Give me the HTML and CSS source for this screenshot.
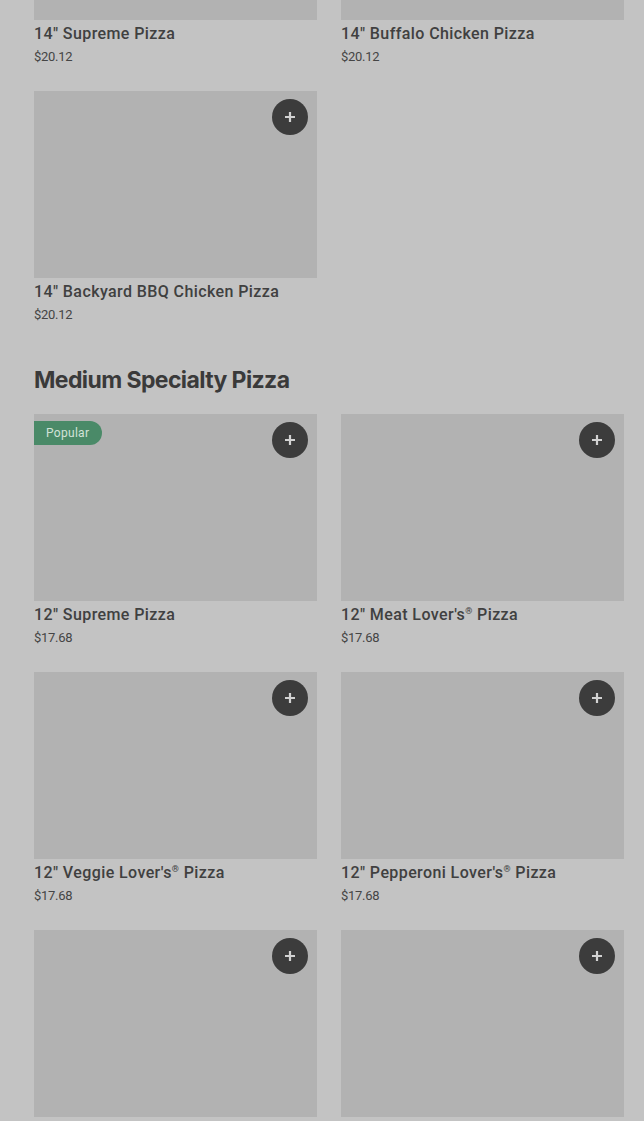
FILE: index.html
```html
<!DOCTYPE html>
<html lang="en">
<head>
  <meta charset="UTF-8">
  <meta name="viewport" content="width=device-width, initial-scale=1.0">
  <title>Menu</title>
  <link rel="stylesheet" href="styles.css">
</head>
<body>
  <div class="menu">
    <!-- Large specialty (scrolled) -->
    <section class="category first">
      <div class="grid">
        <div class="card">
          <div class="thumb"></div>
          <div class="name">14" Supreme Pizza</div>
          <div class="price">$20.12</div>
        </div>
        <div class="card">
          <div class="thumb"></div>
          <div class="name">14" Buffalo Chicken Pizza</div>
          <div class="price">$20.12</div>
        </div>
        <div class="card">
          <div class="thumb">
            <span class="add"><svg viewBox="0 0 12 12"><path d="M6 1v10M1 6h10"/></svg></span>
          </div>
          <div class="name">14" Backyard BBQ Chicken Pizza</div>
          <div class="price">$20.12</div>
        </div>
      </div>
    </section>

    <section class="category">
      <h2>Medium Specialty Pizza</h2>
      <div class="grid">
        <div class="card">
          <div class="thumb">
            <span class="badge">Popular</span>
            <span class="add"><svg viewBox="0 0 12 12"><path d="M6 1v10M1 6h10"/></svg></span>
          </div>
          <div class="name">12" Supreme Pizza</div>
          <div class="price">$17.68</div>
        </div>
        <div class="card">
          <div class="thumb">
            <span class="add"><svg viewBox="0 0 12 12"><path d="M6 1v10M1 6h10"/></svg></span>
          </div>
          <div class="name">12" Meat Lover's<sup>®</sup> Pizza</div>
          <div class="price">$17.68</div>
        </div>
        <div class="card">
          <div class="thumb">
            <span class="add"><svg viewBox="0 0 12 12"><path d="M6 1v10M1 6h10"/></svg></span>
          </div>
          <div class="name">12" Veggie Lover's<sup>®</sup> Pizza</div>
          <div class="price">$17.68</div>
        </div>
        <div class="card">
          <div class="thumb">
            <span class="add"><svg viewBox="0 0 12 12"><path d="M6 1v10M1 6h10"/></svg></span>
          </div>
          <div class="name">12" Pepperoni Lover's<sup>®</sup> Pizza</div>
          <div class="price">$17.68</div>
        </div>
        <div class="card">
          <div class="thumb">
            <span class="add"><svg viewBox="0 0 12 12"><path d="M6 1v10M1 6h10"/></svg></span>
          </div>
          <div class="name">12" Chicken Bacon Parmesan Pizza</div>
          <div class="price">$17.68</div>
        </div>
        <div class="card">
          <div class="thumb">
            <span class="add"><svg viewBox="0 0 12 12"><path d="M6 1v10M1 6h10"/></svg></span>
          </div>
          <div class="name">12" Pepperoni &amp; Mushroom Pizza</div>
          <div class="price">$17.68</div>
        </div>
      </div>
    </section>
  </div>
</body>
</html>
```

FILE: styles.css
```css
body {
  margin: 0;
  padding: 0;
  background: #c3c3c3;
  font-family: Inter, "Liberation Sans", sans-serif;
  color: #3b3b3b;
  overflow: hidden;
}

.menu {
  padding: 0 20px 0 34px;
}

.category.first {
  margin-top: -167px;
}

.category h2 {
  margin: 40px 0 18px;
  font-size: 23px;
  line-height: 32px;
  font-weight: 700;
  letter-spacing: -0.6px;
  color: #3a3a3a;
}

.grid {
  display: grid;
  grid-template-columns: 283px 283px;
  column-gap: 24px;
  row-gap: 25px;
}

.card {
  display: flex;
  flex-direction: column;
}

.thumb {
  position: relative;
  height: 187px;
  background: #b2b2b2;
}

.name {
  margin-top: 4px;
  font-family: Roboto, "Liberation Sans", sans-serif;
  font-size: 16px;
  line-height: 20px;
  font-weight: 500;
  color: #404040;
  letter-spacing: 0.4px;
}

.name sup {
  font-size: 9px;
  line-height: 0;
  vertical-align: 6px;
}

.price {
  margin-top: 4px;
  font-family: Roboto, "Liberation Sans", sans-serif;
  font-size: 13px;
  line-height: 18px;
  color: #454545;
  letter-spacing: -0.3px;
}

.add {
  position: absolute;
  top: 8px;
  right: 9px;
  width: 36px;
  height: 36px;
  border-radius: 50%;
  background: #3c3c3c;
  display: flex;
  align-items: center;
  justify-content: center;
}

.add svg {
  width: 12px;
  height: 12px;
  fill: none;
  stroke: #d2d2d2;
  stroke-width: 2.2;
}

.badge {
  position: absolute;
  top: 7px;
  left: 0;
  height: 24px;
  padding: 0 13px 0 12px;
  border-radius: 0 12px 12px 0;
  background: #4a8a68;
  color: #d2e2d8;
  font-family: Roboto, "Liberation Sans", sans-serif;
  font-size: 12px;
  line-height: 24px;
  letter-spacing: 0.3px;
}
```
